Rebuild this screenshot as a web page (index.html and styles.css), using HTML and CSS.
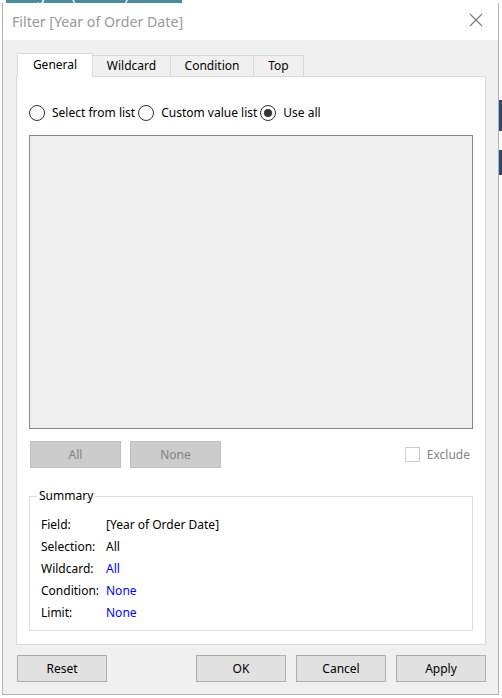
FILE: index.html
```html
<!DOCTYPE html>
<html>
<head>
<meta charset="utf-8">
<link rel="stylesheet" href="styles.css">
</head>
<body>
<div class="backdrop">
  <div class="bg-tab">Region (Orders)</div>
  <div class="side-marks"><span class="mark m1"></span><span class="mark m2"></span></div>
</div>
<div class="dialog">
  <div class="titlebar">
    <span class="title">Filter [Year of Order Date]</span>
    <svg class="close" width="14" height="14" viewBox="0 0 14 14"><path d="M1 1 L13 13 M13 1 L1 13" stroke="#7a7a7a" stroke-width="1.1" fill="none"/></svg>
  </div>
  <div class="body">
    <div class="tabs">
      <div class="tab active">General</div>
      <div class="tab">Wildcard</div>
      <div class="tab">Condition</div>
      <div class="tab">Top</div>
    </div>
    <div class="panel">
      <div class="radios">
        <label class="radio"><span class="circle"></span>Select from list</label>
        <label class="radio"><span class="circle"></span>Custom value list</label>
        <label class="radio"><span class="circle checked"></span>Use all</label>
      </div>
      <div class="listbox"></div>
      <div class="list-actions">
        <div class="btn disabled">All</div>
        <div class="btn disabled">None</div>
        <div class="spacer"></div>
        <label class="check"><span class="box"></span>Exclude</label>
      </div>
      <div class="summary">
        <div class="legend">Summary</div>
        <div class="rows">
          <div class="k">Field:</div><div class="v">[Year of Order Date]</div>
          <div class="k">Selection:</div><div class="v">All</div>
          <div class="k">Wildcard:</div><div class="v link">All</div>
          <div class="k">Condition:</div><div class="v link">None</div>
          <div class="k">Limit:</div><div class="v link">None</div>
        </div>
      </div>
    </div>
    <div class="footer">
      <div class="btn">Reset</div>
      <div class="spacer"></div>
      <div class="btn">OK</div>
      <div class="btn">Cancel</div>
      <div class="btn">Apply</div>
    </div>
  </div>
</div>
</body>
</html>
```
FILE: styles.css
```css
html, body {
  margin: 0;
  padding: 0;
  background: #ffffff;
  width: 502px;
  height: 698px;
  overflow: hidden;
  font-family: "Noto Sans", "Open Sans", sans-serif;
  font-size: 12px;
  color: #000;
}
.backdrop {
  position: absolute;
  left: 0;
  top: 0;
  width: 502px;
  height: 698px;
}
.bg-tab {
  position: absolute;
  left: 6px;
  top: -14px;
  width: 176px;
  height: 17px;
  background: #4a8c9c;
  color: #fff;
  font-size: 15px;
  line-height: 17px;
  padding-left: 12px;
  box-sizing: border-box;
  overflow: hidden;
}
.side-marks .mark {
  position: absolute;
  left: 499px;
  width: 3px;
  background: #2c4a6e;
}
.m1 { top: 100px; height: 31px; }
.m2 { top: 150px; height: 25px; }
.dialog {
  position: absolute;
  left: 2px;
  top: 3px;
  width: 497px;
  height: 692px;
  box-sizing: border-box;
  border: 1px solid #b3b3b3;
  border-top: none;
  display: flex;
  flex-direction: column;
  background: #f0f0f0;
}
.titlebar {
  height: 37px;
  background: #fff;
  display: flex;
  align-items: center;
  padding: 0 15px 0 9px;
  flex: none;
}
.title {
  font-size: 14.2px;
  color: #999999;
  flex: 1;
  margin-top: -1px;
}
.close { margin-top: -3px; }
.body {
  flex: 1;
  padding: 13px 12px 0 13px;
  display: flex;
  flex-direction: column;
}
.tabs {
  display: flex;
  height: 23px;
  align-items: flex-end;
  padding-left: 1px;
  position: relative;
  z-index: 1;
}
.tab {
  height: 21px;
  box-sizing: border-box;
  border: 1px solid #d9d9d9;
  border-bottom: none;
  background: #f0f0f0;
  padding: 0 12px;
  line-height: 20px;
  text-align: center;
  margin-left: -1px;
}
.tab:nth-child(1) { width: 76px; }
.tab:nth-child(2) { width: 79px; }
.tab:nth-child(3) { width: 84px; }
.tab:nth-child(4) { width: 51px; }
.tab.active {
  height: 24px;
  background: #fff;
  margin-bottom: -1px;
  line-height: 22px;
  margin-left: 0;
}
.panel {
  height: 569px;
  box-sizing: border-box;
  background: #fff;
  border: 1px solid #d9d9d9;
  padding: 0 12px 0 12px;
  display: flex;
  flex-direction: column;
}
.radios {
  display: flex;
  height: 58px;
  align-items: center;
  padding-top: 13px;
  box-sizing: border-box;
}
.radio {
  display: flex;
  align-items: center;
  margin-right: 3px;
}
.circle {
  width: 14px;
  height: 14px;
  border: 1px solid #333;
  border-radius: 50%;
  margin-right: 7px;
  position: relative;
  background: #fff;
}
.circle.checked::after {
  content: "";
  position: absolute;
  left: 3px;
  top: 3px;
  width: 8px;
  height: 8px;
  border-radius: 50%;
  background: #333;
}
.listbox {
  height: 294px;
  box-sizing: border-box;
  border: 1px solid #828790;
  background: #efefef;
  flex: none;
}
.list-actions {
  display: flex;
  align-items: center;
  margin-top: 12px;
  height: 27px;
  gap: 9px;
  padding-left: 1px;
}
.spacer { flex: 1; }
.btn {
  width: 90px;
  height: 27px;
  box-sizing: border-box;
  border: 1px solid #adadad;
  background: #e1e1e1;
  text-align: center;
  line-height: 25px;
  color: #000;
}
.list-actions .btn { width: 91px; }
.btn.disabled {
  background: #cccccc;
  border-color: #bfbfbf;
  color: #838383;
}
.check {
  display: flex;
  align-items: center;
  color: #838383;
  margin-right: 3px;
}
.box {
  width: 15px;
  height: 15px;
  box-sizing: border-box;
  border: 1px solid #cccccc;
  margin-right: 7px;
}
.summary {
  margin-top: 28px;
  height: 135px;
  box-sizing: border-box;
  border: 1px solid #dcdcdc;
  position: relative;
  padding: 16px 11px 0 11px;
}
.legend {
  position: absolute;
  top: -9px;
  left: 7px;
  background: #fff;
  padding: 0 2px 0 2px;
  line-height: 16px;
}
.rows {
  display: grid;
  grid-template-columns: 65px auto;
  grid-auto-rows: 22px;
  align-items: center;
}
.link { color: #0000ff; }
.footer {
  display: flex;
  gap: 10px;
  margin-top: 10px;
  padding-left: 1px;
}
```
